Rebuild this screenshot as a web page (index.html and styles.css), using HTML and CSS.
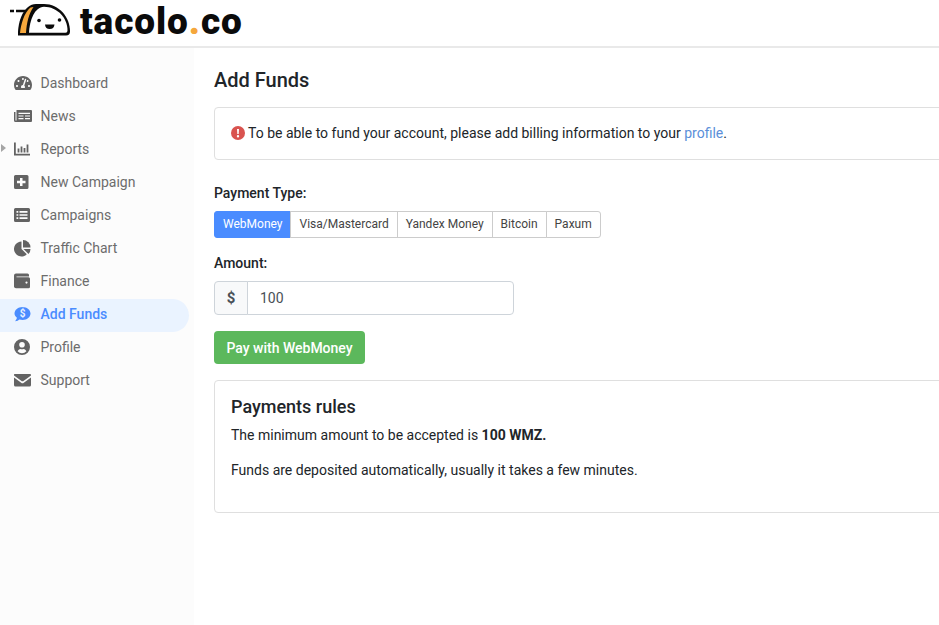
FILE: index.html
```html
<!DOCTYPE html>
<html lang="en">
<head>
  <meta charset="UTF-8" />
  <title>Add Funds</title>
  <link rel="stylesheet" href="styles.css">
</head>
<body>
  <header class="topbar">
    <svg class="logo-mark" width="76" height="40" viewBox="0 0 76 40">
      <path d="M18 35.500C17.500 21 24 4 36 4h8c15 0 26 13 26 27.500q0 4-4 4z" fill="#0b0b0b"/>
      <path d="M20 33C21 24 24 13 30.500 7.500L33.500 7C29 13 26.500 23 26 33z" fill="#f5a73c"/>
      <path d="M29 32.800C29.500 21 34.500 6.800 44 6.800c13 0 23.500 11 23.500 23.700q0 2.300-2 2.300z" fill="#fff"/>
      <path d="M10 11h4M16 11h10" stroke="#0b0b0b" stroke-width="2.400"/>
      <circle cx="39" cy="20.500" r="1.800" fill="#0b0b0b"/>
      <circle cx="59.500" cy="20" r="1.800" fill="#0b0b0b"/>
      <path d="M45 24.500h9.500q-.5 4.500-4.800 4.500T45 24.500z" fill="#0b0b0b"/>
    </svg>
    <span class="logo-text">tacolo<span class="logo-dot">.</span>co</span>
  </header>

  <div class="layout">
    <nav class="sidebar">
      <a class="nav-item">
        <svg class="nav-icon" viewBox="0 0 576 512"><path d="M288 32C128.940 32 0 160.940 0 320c0 52.800 14.250 102.260 39.060 144.800 5.610 9.620 16.300 15.200 27.440 15.200h443c11.140 0 21.830-5.580 27.440-15.200C561.750 422.260 576 372.800 576 320c0-159.060-128.940-288-288-288zm0 64c14.710 0 26.580 10.130 30.320 23.650-1.110 2.260-2.640 4.230-3.450 6.670l-9.220 27.670c-5.130 3.490-10.970 6.010-17.640 6.010-17.670 0-32-14.330-32-32S270.330 96 288 96zM96 384c-17.670 0-32-14.330-32-32s14.330-32 32-32 32 14.330 32 32-14.330 32-32 32zm48-160c-17.670 0-32-14.330-32-32s14.330-32 32-32 32 14.330 32 32-14.330 32-32 32zm246.770-72.410l-61.330 184C343.130 347.330 352 364.540 352 384c0 11.720-3.380 22.550-8.880 32H232.880c-5.500-9.450-8.880-20.280-8.880-32 0-33.940 26.500-61.430 59.900-63.590l61.340-184.010c4.170-12.560 17.730-19.450 30.360-15.170 12.570 4.190 19.350 17.790 15.170 30.360zm14.660 57.200l15.520-46.550c3.470-1.290 7.130-2.230 11.050-2.230 17.670 0 32 14.330 32 32s-14.330 32-32 32c-11.380-.01-20.890-6.280-26.570-15.220zM480 384c-17.670 0-32-14.330-32-32s14.330-32 32-32 32 14.330 32 32-14.330 32-32 32z"/></svg>
        Dashboard
      </a>
      <a class="nav-item">
        <svg class="nav-icon" viewBox="0 0 18 18"><path fill-rule="evenodd" d="M2.500 3H17a1 1 0 0 1 1 1v10a1 1 0 0 1-1 1H1.500A1.500 1.500 0 0 1 0 13.500V5h1.500v8.500h1zM4.500 5.800V7h11.500V5.800zM4.500 8.400v1.200h5V8.400zM11 8.400v1.200h5V8.400zM4.500 11v1.200h5V11zM11 11v1.200h5V11z"/></svg>
        News
      </a>
      <a class="nav-item has-arrow">
        <svg class="nav-icon" viewBox="0 0 18 18"><path d="M0 2.500h1.800v11.200H16v1.800H0zM3.600 8.500h1.800v4H3.600zM6.600 6.500h1.800v6H6.600zM9.600 8h1.800v4.500H9.600zM12.600 4.500h1.800v8h-1.800z"/></svg>
        Reports
      </a>
      <a class="nav-item">
        <svg class="nav-icon" viewBox="0 0 18 18"><path fill-rule="evenodd" d="M1.500 2H13a1.500 1.500 0 0 1 1.500 1.500v11A1.500 1.500 0 0 1 13 16H1.500A1.500 1.500 0 0 1 0 14.500v-11A1.500 1.500 0 0 1 1.500 2zM6 5v2.800H3v2.400h3V13h2.500v-2.800h3V7.800h-3V5z"/></svg>
        New Campaign
      </a>
      <a class="nav-item">
        <svg class="nav-icon" viewBox="0 0 18 18"><path fill-rule="evenodd" d="M1.500 2h13A1.500 1.500 0 0 1 16 3.500v11a1.500 1.500 0 0 1-1.500 1.500h-13A1.500 1.500 0 0 1 0 14.500v-11A1.500 1.500 0 0 1 1.500 2zM2.500 5v1.700h1.800V5zM5.500 5v1.700h8V5zM2.500 8.200v1.600h1.800V8.200zM5.500 8.200v1.600h8V8.200zM2.500 11.300V13h1.800v-1.700zM5.500 11.300V13h8v-1.700z"/></svg>
        Campaigns
      </a>
      <a class="nav-item">
        <svg class="nav-icon" viewBox="0 0 18 18"><path d="M7.500 2.500a7.500 7.500 0 1 0 5.300 12.800L7.500 10z"/><path d="M9 1v7.500h7.500A7.500 7.500 0 0 0 9 1z"/><path d="M9.500 10l5 5a7.500 7.500 0 0 0 2-5z"/></svg>
        Traffic Chart
      </a>
      <a class="nav-item">
        <svg class="nav-icon" viewBox="0 0 18 18"><path fill-rule="evenodd" d="M2 1.500h11.500a1.500 1.500 0 0 1 1.500 1.500v1.500H2.500v.7H14.500a1.500 1.500 0 0 1 1.500 1.500v8a1.500 1.500 0 0 1-1.500 1.500H2A2 2 0 0 1 0 14V3.500a2 2 0 0 1 2-2zM12.500 9.500a1.100 1.100 0 1 0 0 2.200 1.100 1.100 0 0 0 0-2.200z"/></svg>
        Finance
      </a>
      <a class="nav-item active">
        <svg class="nav-icon" viewBox="0 0 18 18"><path d="M8.500 2c4.400 0 8 2.900 8 6.500S12.900 15 8.500 15c-1 0-2-.2-3-.5-.9.800-2.500 1.700-4.500 1.700.9-.9 1.700-2.200 1.900-3.400C1.500 11.600.5 10.100.5 8.500.5 4.900 4.100 2 8.500 2z"/><text class="bubble-sign" x="8.500" y="12">$</text></svg>
        Add Funds
      </a>
      <a class="nav-item">
        <svg class="nav-icon" viewBox="0 0 18 18"><path fill-rule="evenodd" d="M8 1a8 8 0 1 1 0 16A8 8 0 0 1 8 1zM8 4a2.800 2.800 0 1 0 0 5.600A2.800 2.800 0 0 0 8 4zM3.600 13.300a6 6 0 0 0 8.800 0c-.5-1.500-1.600-2.400-2.800-2.400-.6 0-.9.300-1.600.3s-1-.3-1.600-.3c-1.200 0-2.300.9-2.800 2.400z"/></svg>
        Profile
      </a>
      <a class="nav-item">
        <svg class="nav-icon" viewBox="0 0 18 18"><path d="M.5 3h15.500a1 1 0 0 1 1 1v.5L9.100 10.200a1.500 1.500 0 0 1-1.200 0L0 4.500V4a1 1 0 0 1 .5-1zM0 6.500l7.200 5.200a2 2 0 0 0 2.600 0L17 6.500V14a1.500 1.500 0 0 1-1.500 1.500h-14A1.500 1.500 0 0 1 0 14z"/></svg>
        Support
      </a>
    </nav>

    <main class="content">
      <h1 class="page-title">Add Funds</h1>

      <div class="card notice">
        <svg class="notice-icon" viewBox="0 0 14 14"><circle cx="7" cy="7" r="7"/><path d="M6 3h2l-.3 5H6.300zM7 9a1.200 1.200 0 1 1 0 2.400A1.200 1.200 0 0 1 7 9z" fill="#fff"/></svg>
        <span>To be able to fund your account, please add billing information to your <a class="link">profile</a>.</span>
      </div>

      <label class="field-label">Payment Type:</label>
      <div class="btn-group">
        <button class="tab active">WebMoney</button>
        <button class="tab">Visa/Mastercard</button>
        <button class="tab">Yandex Money</button>
        <button class="tab">Bitcoin</button>
        <button class="tab">Paxum</button>
      </div>

      <label class="field-label amount-label">Amount:</label>
      <div class="input-group">
        <span class="addon">$</span>
        <input class="amount" type="text" value="100">
      </div>

      <button class="btn-pay">Pay with WebMoney</button>

      <div class="card rules">
        <h2 class="rules-title">Payments rules</h2>
        <p class="rules-line">The minimum amount to be accepted is <strong>100 WMZ.</strong></p>
        <p class="rules-line">Funds are deposited automatically, usually it takes a few minutes.</p>
      </div>
    </main>
  </div>
</body>
</html>
```

FILE: styles.css
```css
* { box-sizing: border-box; }
html, body { height: 100%; }
body {
  margin: 0;
  font-family: Roboto, sans-serif;
  font-size: 14px;
  color: #212529;
  background-color: #fff;
  overflow: hidden;
}
.topbar {
  height: 48px;
  display: flex;
  align-items: flex-start;
  gap: 4px;
  border-bottom: 2px solid #e9e9e9;
}
.logo-mark { flex: none; }
.logo-text {
  font-size: 37px;
  font-weight: 900;
  line-height: 44px;
  letter-spacing: 0.900px;
  color: #0b0b0b;
}
.logo-dot { color: #f5a73c; }
.layout {
  display: flex;
  height: calc(100% - 48px);
}
.sidebar {
  width: 194px;
  flex: none;
  padding: 20px 5px 0 0;
  background-color: #fcfcfc;
}
.nav-item {
  position: relative;
  display: flex;
  align-items: center;
  height: 33px;
  padding: 0 0 3px 14px;
  color: #6c6c6c;
  border-radius: 0 17px 17px 0;
}
.nav-icon {
  width: 18px;
  height: 18px;
  margin-right: 8.500px;
  fill: #636363;
  flex: none;
}
.has-arrow::before {
  content: "";
  position: absolute;
  left: 1px;
  top: 10px;
  border-left: 5px solid #a5a5a5;
  border-top: 4.500px solid transparent;
  border-bottom: 4.500px solid transparent;
}
.nav-item.active {
  background-color: #eaf3ff;
  color: #4a8cff;
  font-weight: 500;
}
.nav-item.active .nav-icon { fill: #4a8cff; }
.bubble-sign {
  fill: #eaf3ff;
  font-family: Roboto, sans-serif;
  font-size: 10px;
  font-weight: 700;
  text-anchor: middle;
}
.content {
  flex: 1;
  min-width: 0;
  padding: 20px 0 0 20px;
}
.page-title {
  margin: 0 0 15px;
  font-size: 20px;
  font-weight: 500;
  line-height: 24px;
}
.card {
  width: 800px;
  border: 1px solid #dfdfdf;
  border-radius: 4px;
  background-color: #fff;
}
.notice {
  display: flex;
  align-items: center;
  height: 53px;
  padding: 0 0 2px 16px;
  margin-bottom: 25px;
}
.notice-icon {
  width: 14px;
  height: 14px;
  margin-right: 3px;
  fill: #d9534f;
  flex: none;
}
.link { color: #5b8fd9; }
.field-label {
  display: block;
  margin-bottom: 9px;
  font-weight: 500;
  line-height: 17px;
}
.amount-label { margin-top: 17px; }
.btn-group { display: flex; }
.tab {
  height: 27px;
  padding: 0 8px 2px;
  font-family: Roboto, sans-serif;
  font-size: 12px;
  color: #444;
  background-color: #fff;
  border: 1px solid #ccc;
  margin-left: -1px;
}
.tab:first-child { margin-left: 0; border-radius: 3px 0 0 3px; }
.tab:last-child { border-radius: 0 3px 3px 0; }
.tab.active {
  color: #fff;
  background-color: #4a8cff;
  border-color: #4a8cff;
}
.input-group {
  display: flex;
  width: 300px;
  height: 34px;
  margin-bottom: 16px;
}
.addon {
  width: 34px;
  display: flex;
  align-items: center;
  justify-content: center;
  font-size: 15px;
  font-weight: 700;
  color: #495057;
  background-color: #f8f9fa;
  border: 1px solid #ced4da;
  border-radius: 4px 0 0 4px;
}
.amount {
  flex: 1;
  min-width: 0;
  margin-left: -1px;
  padding: 0 12px;
  font-family: Roboto, sans-serif;
  font-size: 14px;
  color: #495057;
  border: 1px solid #ced4da;
  border-radius: 0 4px 4px 0;
}
.btn-pay {
  display: block;
  width: 151px;
  height: 33px;
  padding: 0;
  font-family: Roboto, sans-serif;
  font-size: 14px;
  font-weight: 500;
  color: #fff;
  background-color: #5cb85c;
  border: none;
  border-radius: 4px;
  margin-bottom: 16px;
}
.rules {
  height: 133px;
  padding: 15px 16px;
}
.rules-title {
  margin: 0;
  font-size: 18px;
  font-weight: 500;
  line-height: 21px;
}
.rules-line {
  margin: 0 0 14px;
  padding-top: 8px;
  line-height: 21px;
}
.rules-line + .rules-line { padding-top: 0; }
strong { font-weight: 700; }
```
